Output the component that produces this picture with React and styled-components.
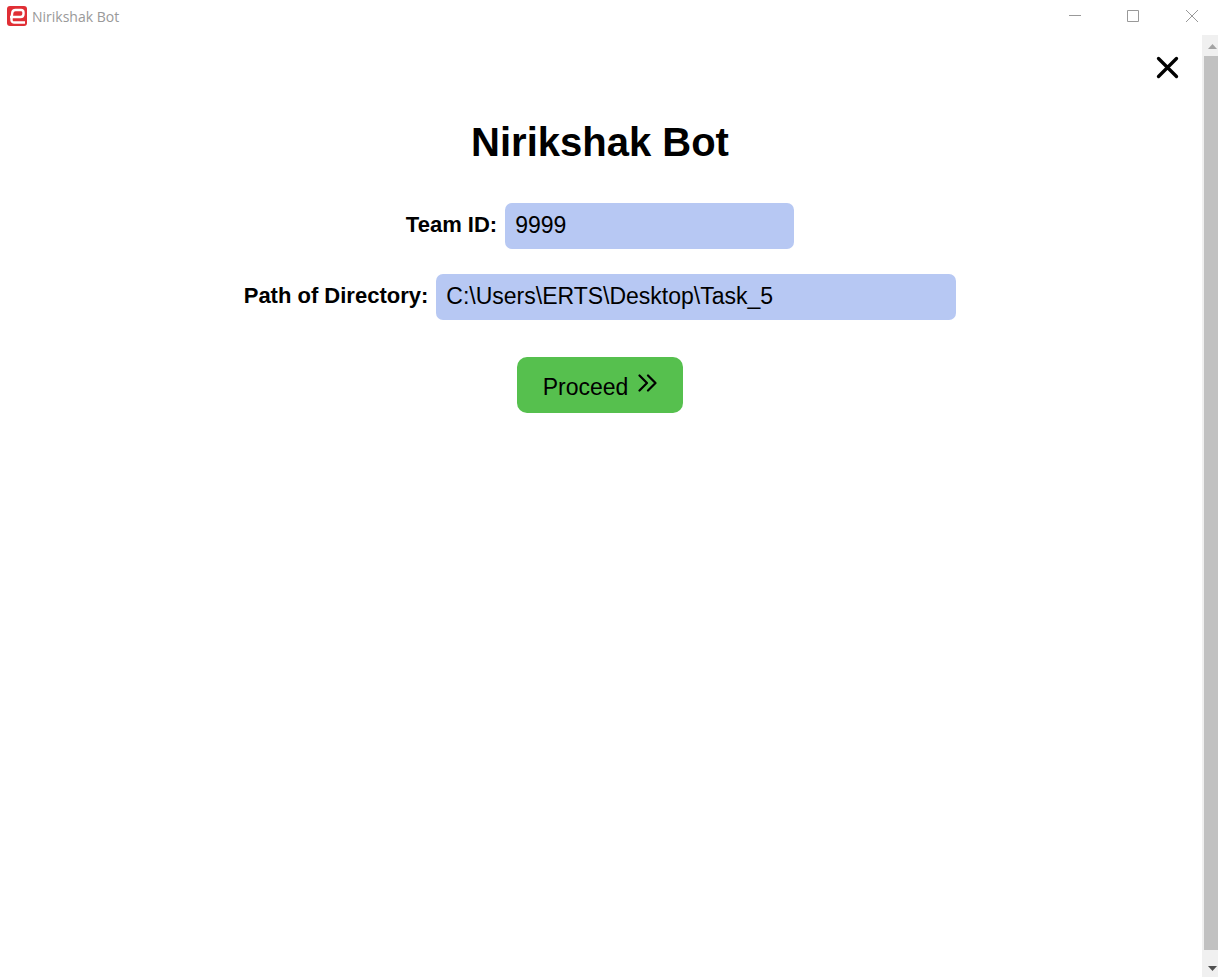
import React, { useState } from "react";
import styled, { createGlobalStyle } from "styled-components";

const GlobalStyle = createGlobalStyle`
  *, *::before, *::after { box-sizing: border-box; }
  body {
    margin: 0;
    background: #fff;
    color: #000;
    font-family: "Liberation Sans", Arial, sans-serif;
  }
`;

const Window = styled.div`
  display: flex;
  flex-direction: column;
  min-height: 100vh;
`;

const TitleBar = styled.header`
  display: flex;
  align-items: center;
  height: 35px;
  padding: 0 0 3px 7px;
`;

const AppName = styled.span`
  flex: 1;
  margin-left: 5px;
  padding-top: 2px;
  font-family: "Open Sans", "Noto Sans", sans-serif;
  font-size: 14px;
  line-height: 20px;
  color: #999;
`;

const WindowButton = styled.button`
  display: flex;
  align-items: center;
  justify-content: center;
  width: 58px;
  height: 32px;
  padding: 0;
  border: 0;
  background: none;
  color: #999;

  &:last-child {
    width: 56px;
    padding-left: 4px;
  }
`;

const Body = styled.div`
  display: flex;
  flex: 1;
`;

const Page = styled.main`
  display: flex;
  flex: 1;
  flex-direction: column;
  min-width: 0;
  padding: 18px 0;
`;

const CloseButton = styled.button`
  display: flex;
  align-self: flex-end;
  margin-right: 20px;
  padding: 0;
  border: 0;
  background: none;
  color: #000;
`;

const Form = styled.form`
  display: flex;
  flex-direction: column;
  align-items: center;
  padding: 37px 2px 0 0;
`;

const Heading = styled.h1`
  margin: 0 0 38px;
  font-size: 40px;
  line-height: 46px;
`;

const Field = styled.div`
  display: flex;
  align-items: center;
  gap: 8px;
  max-width: 100%;
  margin-bottom: 25px;
`;

const Label = styled.label`
  padding-bottom: 2px;
  font-size: 22px;
  font-weight: 700;
  line-height: 26px;
  white-space: nowrap;
`;

const TextInput = styled.input`
  width: ${({ $wide }) => ($wide ? 520 : 289)}px;
  min-width: 0;
  height: 46px;
  padding: 0 10px 2px;
  border: 0;
  border-radius: 7px;
  background: #b7c8f3;
  color: #000;
  font: 23px "Liberation Sans", Arial, sans-serif;
`;

const ProceedButton = styled.button`
  display: flex;
  align-items: center;
  gap: 10px;
  height: 56px;
  margin-top: 12px;
  padding: 0 26px;
  border: 0;
  border-radius: 10px;
  background: #56c04e;
  color: #000;
  font: 23px "Liberation Sans", Arial, sans-serif;

  span { padding-top: 4px; }
  svg { margin-bottom: 4px; }
`;

const Scrollbar = styled.div`
  display: flex;
  flex-direction: column;
  width: 16px;
  background: #f0f0f0;
`;

const ScrollArrow = styled.button`
  display: flex;
  align-items: flex-end;
  justify-content: flex-end;
  height: ${({ $end }) => ($end ? 27 : 21)}px;
  padding: 0 1px ${({ $end }) => ($end ? 6 : 7)}px 0;
  border: 0;
  background: none;
  color: ${({ $end }) => ($end ? "#505050" : "#a3a3a3")};
`;

const ScrollThumb = styled.div`
  flex: 1;
  margin-left: 2px;
  background: #c1c1c1;
`;

function Logo() {
  return (
    <svg width="20" height="20" viewBox="0 0 20 20" aria-hidden="true">
      <rect width="20" height="20" rx="3" fill="#e02f35" />
      <path
        d="M3 11H13.5Q16.5 11 16.5 8V6.5Q16.5 4 14 4H8.5Q5.5 4 5.2 7L4.5 13Q4.2 16.5 7 16.5H18"
        fill="none"
        stroke="#fff"
        strokeWidth="2.4"
      />
    </svg>
  );
}

export default function App() {
  const [team, setTeam] = useState("9999");
  const [path, setPath] = useState("C:\\Users\\ERTS\\Desktop\\Task_5");

  return (
    <Window>
      <GlobalStyle />
      <TitleBar>
        <Logo />
        <AppName>Nirikshak Bot</AppName>
        <WindowButton aria-label="Minimize">
          <svg width="12" height="12" viewBox="0 0 12 12" stroke="currentColor">
            <path d="M0 5.5H12" />
          </svg>
        </WindowButton>
        <WindowButton aria-label="Maximize">
          <svg width="12" height="12" viewBox="0 0 12 12" fill="none" stroke="currentColor">
            <path d="M.5.5H11.5V11.5H.5Z" />
          </svg>
        </WindowButton>
        <WindowButton aria-label="Close window">
          <svg width="12" height="12" viewBox="0 0 12 12" stroke="currentColor">
            <path d="M0 0L12 12M12 0L0 12" />
          </svg>
        </WindowButton>
      </TitleBar>
      <Body>
        <Page>
          <CloseButton aria-label="Close">
            <svg width="29" height="29" viewBox="0 0 29 29" fill="none" stroke="currentColor" strokeWidth="3.3" strokeLinecap="round">
              <path d="M5.5 5.5L23.5 23.5M23.5 5.5L5.5 23.5" />
            </svg>
          </CloseButton>
          <Form onSubmit={(event) => event.preventDefault()}>
            <Heading>Nirikshak Bot</Heading>
            <Field>
              <Label htmlFor="team">Team ID:</Label>
              <TextInput id="team" value={team} onChange={(e) => setTeam(e.target.value)} />
            </Field>
            <Field>
              <Label htmlFor="path">Path of Directory:</Label>
              <TextInput id="path" $wide value={path} onChange={(e) => setPath(e.target.value)} />
            </Field>
            <ProceedButton type="submit">
              <span>Proceed</span>
              <svg width="19" height="18" viewBox="0 0 19 18" fill="none" stroke="currentColor" strokeWidth="2.2" strokeLinecap="round" strokeLinejoin="round">
                <path d="M1.5 1.5L9 9L1.5 16.5M10 1.5L17.5 9L10 16.5" />
              </svg>
            </ProceedButton>
          </Form>
        </Page>
        <Scrollbar>
          <ScrollArrow aria-label="Scroll up">
            <svg width="9" height="5" viewBox="0 0 9 5" fill="currentColor">
              <path d="M0 5L4.5 0L9 5Z" />
            </svg>
          </ScrollArrow>
          <ScrollThumb />
          <ScrollArrow $end aria-label="Scroll down">
            <svg width="9" height="5" viewBox="0 0 9 5" fill="currentColor">
              <path d="M0 0L4.5 5L9 0Z" />
            </svg>
          </ScrollArrow>
        </Scrollbar>
      </Body>
    </Window>
  );
}
